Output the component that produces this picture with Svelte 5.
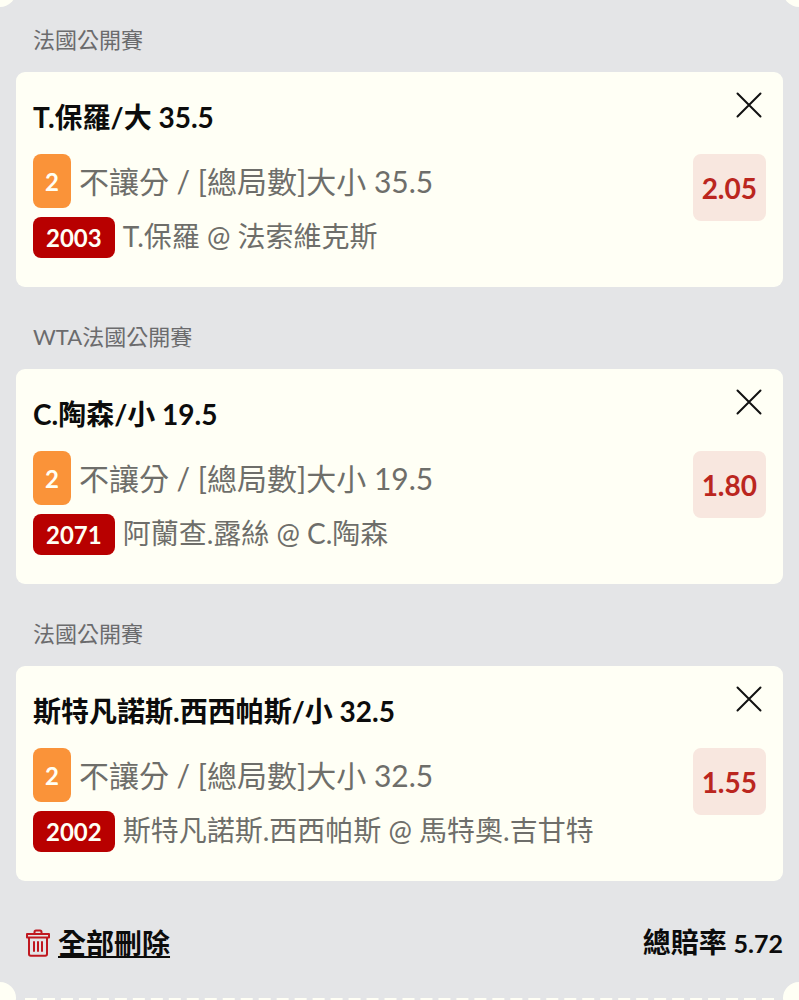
<script>
  let bets = $state([
    { id: 2003, league: '法國公開賽', pick: 'T.保羅/大 35.5', count: 2, market: '不讓分 / [總局數]大小 35.5', match: 'T.保羅 @ 法索維克斯', odds: 2.05 },
    { id: 2071, league: 'WTA法國公開賽', pick: 'C.陶森/小 19.5', count: 2, market: '不讓分 / [總局數]大小 19.5', match: '阿蘭查.露絲 @ C.陶森', odds: 1.8 },
    { id: 2002, league: '法國公開賽', pick: '斯特凡諾斯.西西帕斯/小 32.5', count: 2, market: '不讓分 / [總局數]大小 32.5', match: '斯特凡諾斯.西西帕斯 @ 馬特奧.吉甘特', odds: 1.55 },
  ]);

  let total = $derived(bets.reduce((product, bet) => product * bet.odds, bets.length ? 1 : 0));

  function removeBet(id) {
    bets = bets.filter((bet) => bet.id !== id);
  }

  function removeAll() {
    bets = [];
  }
</script>

<main class="slip">
  <i class="notch top left"></i>
  <i class="notch top right"></i>

  {#each bets as bet (bet.id)}
    <section class="bet">
      <h2 class="league">{bet.league}</h2>
      <article class="card">
        <header class="card-head">
          <h3 class="pick">{bet.pick}</h3>
          <button class="close" aria-label="移除" onclick={() => removeBet(bet.id)}>
            <svg viewBox="0 0 26 26" width="26" height="26" aria-hidden="true">
              <path d="M1.500 1.500 24.500 24.500M24.500 1.500 1.500 24.500" />
            </svg>
          </button>
        </header>
        <div class="card-body">
          <div class="details">
            <div class="line">
              <span class="badge count">{bet.count}</span>
              <span class="market">{bet.market}</span>
            </div>
            <div class="line">
              <span class="badge code">{bet.id}</span>
              <span class="match">{bet.match}</span>
            </div>
          </div>
          <strong class="odds">{bet.odds.toFixed(2)}</strong>
        </div>
      </article>
    </section>
  {/each}

  <footer class="summary">
    <button class="clear" onclick={removeAll}>
      <svg viewBox="0 0 24 28" width="24" height="28" aria-hidden="true">
        <path d="M1 5h22v3.500H1zM8.500 4.500V3q0-1.500 1.500-1.500h4q1.500 0 1.500 1.500v1.500M3 9v16q0 1.800 1.800 1.800h14.400q1.800 0 1.800-1.800V9" />
        <path d="M8 13v9M12 13v9M16 13v9" />
      </svg>
      <span>全部刪除</span>
    </button>
    <p class="total">總賠率 <span>{total.toFixed(2)}</span></p>
  </footer>

  <div class="tear">
    <i class="notch bottom left"></i>
    <i class="notch bottom right"></i>
  </div>
</main>

<style>
  :global(body) {
    margin: 0;
    background: #e4e5e7;
  }

  .slip {
    position: relative;
    overflow: hidden;
    background: #e4e5e7;
    color: #0c0c0c;
    font-family: Lato, 'Noto Sans CJK TC', sans-serif;
  }

  .bet {
    padding: 0 16px;
  }

  .league {
    margin: 0;
    padding: 34px 17px 16px;
    color: #6b6b6d;
    font-size: 22px;
    font-weight: 400;
    line-height: 32px;
  }

  .bet:first-of-type .league {
    padding-top: 24px;
  }

  .card {
    padding: 20px 17px 29px;
    border-radius: 9px;
    background: #fffff5;
  }

  .card-head,
  .card-body {
    display: flex;
    align-items: flex-start;
    justify-content: space-between;
  }

  .pick {
    margin: 0 0 12px;
    font-size: 28px;
    font-weight: 700;
    line-height: 50px;
  }

  .close {
    margin-right: 4px;
    padding: 0;
    border: 0;
    background: none;
    line-height: 0;
    cursor: pointer;
  }

  .close path {
    fill: none;
    stroke: #111;
    stroke-width: 2;
    stroke-linecap: round;
  }

  .details {
    display: flex;
    flex-direction: column;
    gap: 9px;
  }

  .line {
    display: flex;
    align-items: center;
    gap: 8px;
    color: #6e6e6a;
  }

  .badge {
    display: flex;
    align-items: center;
    border-radius: 8px;
    padding: 0 13px;
    color: #fffff5;
    font-size: 24px;
    font-weight: 700;
  }

  .count {
    height: 54px;
    padding: 0 12px;
    background: #fa9339;
  }

  .code {
    height: 41px;
    background: #b80000;
  }

  .market {
    font-size: 30px;
    line-height: 41px;
  }

  .match {
    padding-bottom: 2px;
    font-size: 28px;
    line-height: 39px;
  }

  .odds {
    padding: 2px 9px 0;
    border-radius: 8px;
    background: #f8e7df;
    color: #bb261e;
    font-size: 28px;
    line-height: 65px;
  }

  .summary {
    display: flex;
    align-items: center;
    justify-content: space-between;
    padding: 41px 16px 34px 26px;
  }

  .clear {
    display: flex;
    align-items: center;
    gap: 8px;
    padding: 0;
    border: 0;
    background: none;
    color: inherit;
    font-family: inherit;
    font-size: 28px;
    font-weight: 700;
    line-height: 41px;
    cursor: pointer;
  }

  .clear span {
    text-decoration: underline;
    text-decoration-thickness: 2px;
    text-underline-offset: 2px;
  }

  .clear path {
    fill: none;
    stroke: #c01820;
    stroke-width: 2;
    stroke-linecap: round;
    stroke-linejoin: round;
  }

  .total {
    margin: 0;
    font-size: 28px;
    font-weight: 700;
    line-height: 41px;
  }

  .total span {
    font-size: 25px;
  }

  .tear {
    position: relative;
    margin: 0 25px;
    border-top: 6px dashed #fffff5;
  }

  .notch {
    position: absolute;
    width: 32px;
    height: 32px;
    border-radius: 50%;
    background: #fffff5;
  }

  .top {
    top: -25px;
  }

  .bottom {
    top: -22px;
  }

  .left {
    left: -16px;
  }

  .right {
    right: -16px;
  }

  .tear .left {
    left: -41px;
  }

  .tear .right {
    right: -41px;
  }
</style>
